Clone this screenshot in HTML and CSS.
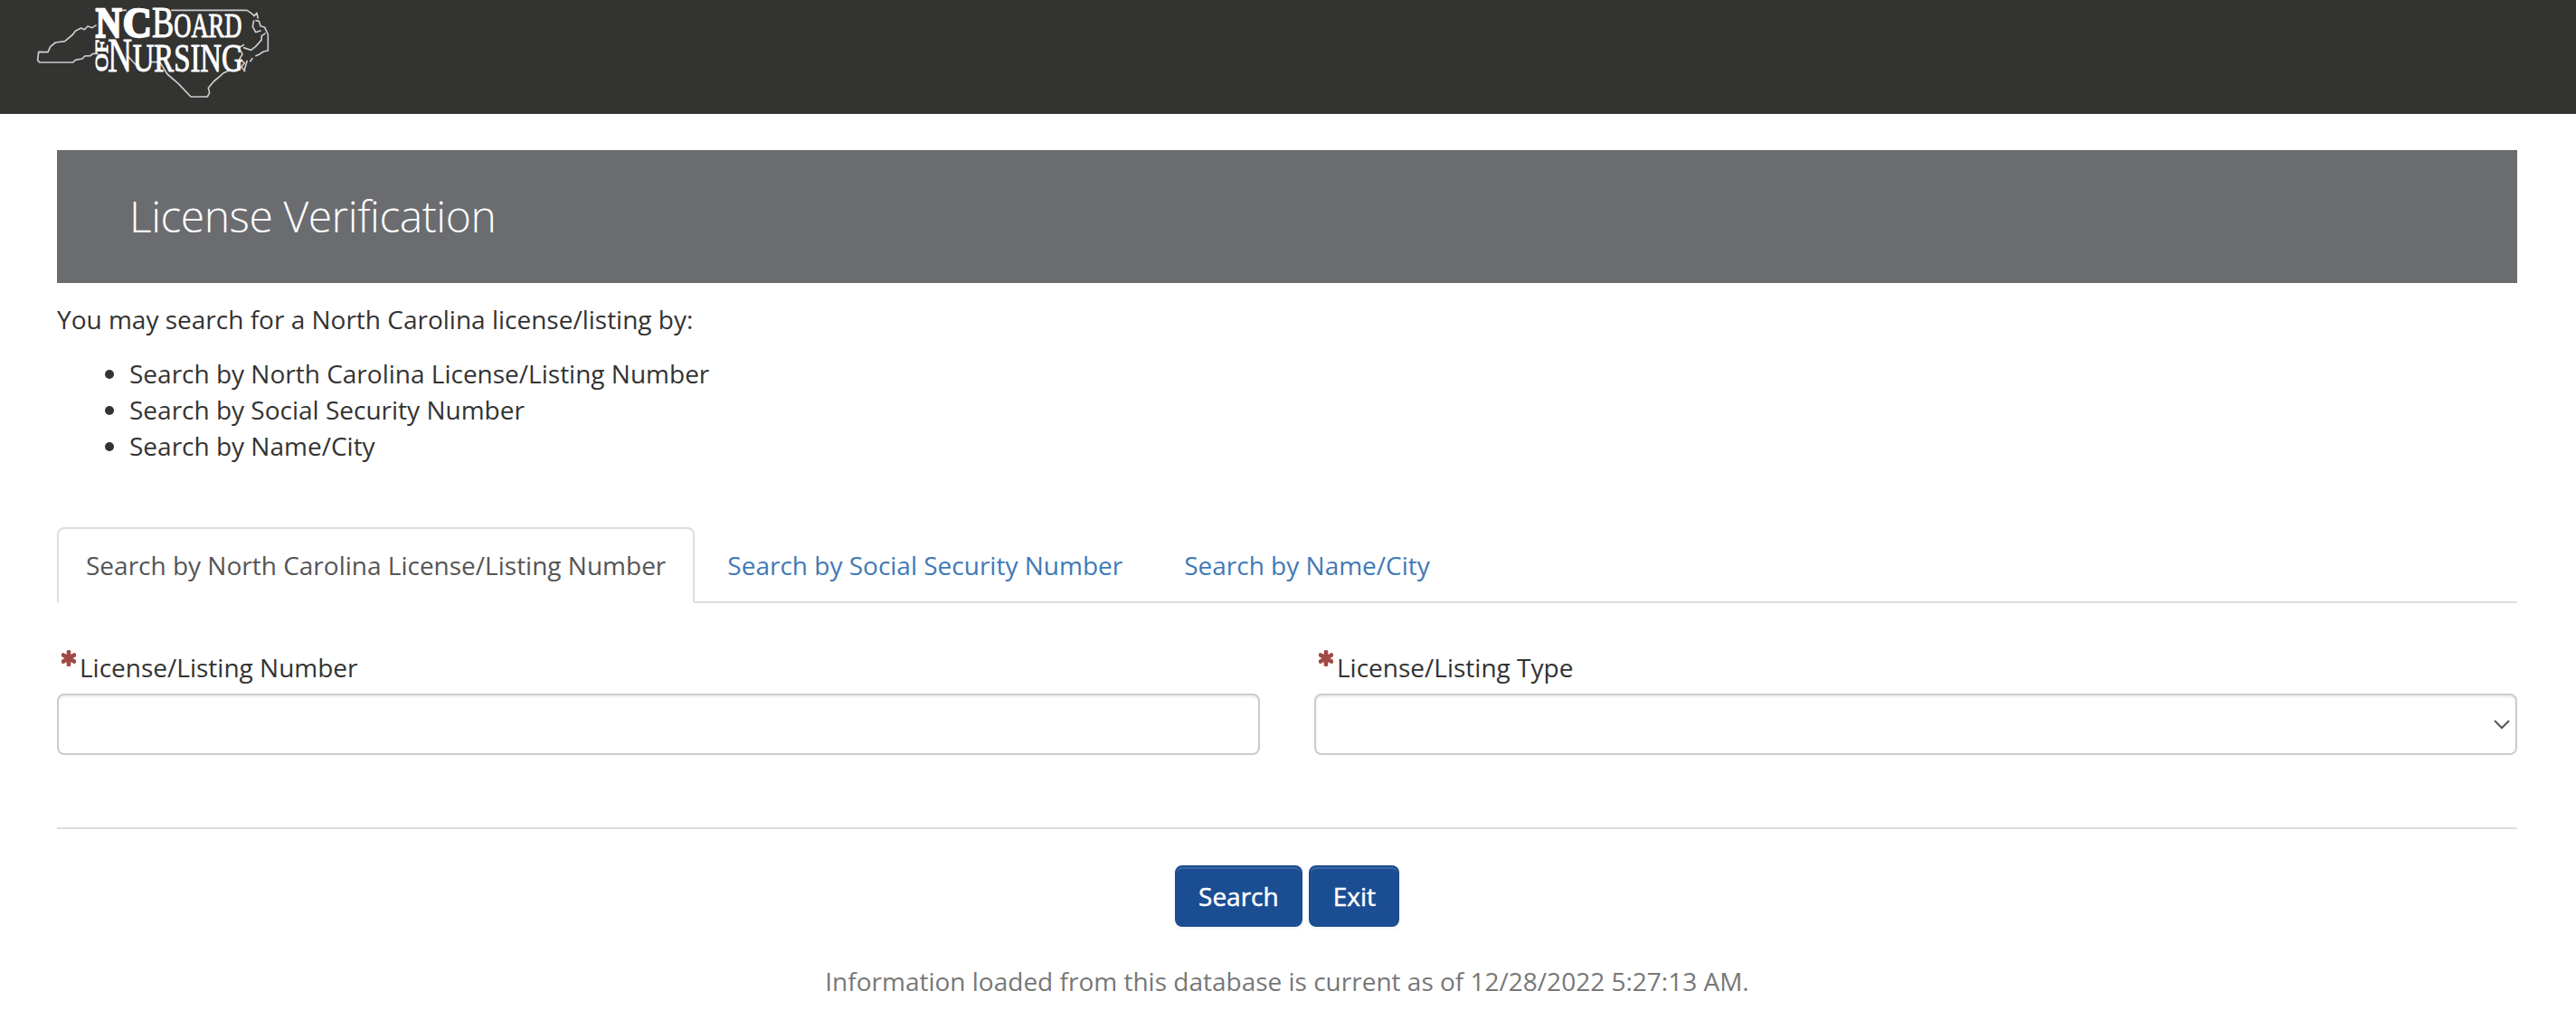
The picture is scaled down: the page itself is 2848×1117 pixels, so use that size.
FILE: index.html
```html
<!DOCTYPE html>
<html lang="en">
<head>
<meta charset="utf-8">
<title>License Verification</title>
<link rel="stylesheet" href="styles.css">
</head>
<body>
<header class="site-header">
  <svg class="logo" viewBox="0 0 840 378" role="img" aria-label="NC Board of Nursing">
    <g class="outline">
      <path d="M230 83L216 92L201 87L190 98L179 93L160 103L152 114L125 137L94 141L77 155L69 173L38 172L35 200L41 207H152L160 199L183 195L191 186L210 185L218 178H236"/>
      <path d="M310 34H330M478 34H729L744 44L753 53L762 43L766 62M752 67L748 88L758 107L776 101M757 68L769 70L774 86L788 91L799 114V168L784 171L769 181L757 186M791 110L778 119L777 133L758 154L743 166L717 158M748 193L739 205M730 200L719 238M720 148L703 158L714 180L704 197L721 209L710 222L724 236"/>
      <path d="M336 188L350 204L372 226M410 206H440L465 246L502 278L543 321H598L605 308L601 292L619 270L642 251L650 243L674 232"/>
    </g>
    <g class="wordmark">
      <text class="heavy" x="227" y="124" font-size="141" textLength="86" lengthAdjust="spacingAndGlyphs">N</text>
      <text class="heavy" x="317" y="123" font-size="138" textLength="96" lengthAdjust="spacingAndGlyphs">C</text>
      <text x="414" y="124" font-size="146" textLength="73" lengthAdjust="spacingAndGlyphs">B</text>
      <text x="487" y="124" font-size="112" textLength="225" lengthAdjust="spacingAndGlyphs">OARD</text>
      <text transform="translate(267 237) rotate(-90)" x="0" y="0" font-size="55" textLength="105" lengthAdjust="spacingAndGlyphs">OF</text>
      <text x="268" y="238" font-size="160" textLength="80" lengthAdjust="spacingAndGlyphs">N</text>
      <text x="350" y="238" font-size="131" textLength="366" lengthAdjust="spacingAndGlyphs">URSING</text>
    </g>
  </svg>
</header>
<main class="page">
  <div class="banner"><h1>License Verification</h1></div>
  <p class="intro">You may search for a North Carolina license/listing by:</p>
  <ul class="options">
    <li>Search by North Carolina License/Listing Number</li>
    <li>Search by Social Security Number</li>
    <li>Search by Name/City</li>
  </ul>
  <nav class="tabs">
    <a class="tab active">Search by North Carolina License/Listing Number</a>
    <a class="tab">Search by Social Security Number</a>
    <a class="tab">Search by Name/City</a>
  </nav>
  <form class="search-form">
    <div class="fields">
      <div class="field">
        <label for="number"><svg class="required" viewBox="0 0 16 18"><path d="M8 2V16M2 5.5L14 12.5M14 5.5L2 12.5"/></svg>License/Listing Number</label>
        <input class="control" id="number" type="text">
      </div>
      <div class="field">
        <label for="type"><svg class="required" viewBox="0 0 16 18"><path d="M8 2V16M2 5.5L14 12.5M14 5.5L2 12.5"/></svg>License/Listing Type</label>
        <div class="control select" id="type"><svg class="chevron" viewBox="0 0 18 11"><path d="M1 1L9 9L17 1"/></svg></div>
      </div>
    </div>
    <div class="actions">
      <button class="button" type="button">Search</button>
      <button class="button" type="button">Exit</button>
    </div>
  </form>
  <p class="note">Information loaded from this database is current as of 12/28/2022 5:27:13 AM.</p>
</main>
</body>
</html>
```
FILE: styles.css
```css
* { box-sizing: border-box; }
body {
  margin: 0;
  background: #fff;
  color: #333;
  font: 28px/40px "Open Sans", sans-serif;
  overflow: hidden;
}
.site-header { height: 126px; padding-left: 30px; background: #333331; }
.logo { display: block; width: 280px; height: 126px; }
.outline path { fill: none; stroke: #ccc; stroke-width: 5; stroke-linejoin: round; }
.wordmark { fill: #fff; stroke: #fff; stroke-width: 3; font-family: "Liberation Serif", serif; }
.heavy { font-weight: 700; stroke-width: 7; }
.page { padding: 40px 65px 0 63px; }
.banner { height: 147px; padding: 40px 80px; background: #6b6c70; }
h1 {
  margin: 0;
  color: #fff;
  font-size: 48px;
  font-weight: 300;
  line-height: 65px;
  letter-spacing: -.47px;
}
.intro { margin: 20px 0; }
.options { margin: 0; padding-left: 80px; }
.tabs { display: flex; gap: 4px; height: 84px; margin-top: 70px; border-bottom: 2px solid #ddd; }
.tab {
  height: 84px;
  padding: 20px 30px;
  border: 2px solid transparent;
  border-radius: 8px 8px 0 0;
  color: #4179b5;
}
.active { background: #fff; border-color: #ddd #ddd #fff; color: #555; }
.fields { display: grid; grid-template-columns: 1fr 1fr; gap: 60px; padding: 51px 0 80px; border-bottom: 2px solid #ddd; }
label { display: flex; height: 49px; }
.required { width: 16px; height: 18px; margin: 1px 4px 0 5px; }
.required path { fill: none; stroke: #a04a45; stroke-width: 4.6; stroke-linecap: round; }
.control {
  display: block;
  width: 100%;
  height: 68px;
  border: 2px solid #ccc;
  border-radius: 8px;
  background: #fff;
  box-shadow: inset 0 2px 2px rgba(0, 0, 0, .075);
}
.select { display: flex; align-items: center; justify-content: flex-end; padding-right: 6px; }
.chevron { width: 18px; height: 11px; }
.chevron path { fill: none; stroke: #555; stroke-width: 2; }
.actions { display: flex; justify-content: center; gap: 7px; padding-top: 40px; }
.button {
  height: 68px;
  padding: 0 24.5px;
  border: 2px solid #1b4d93;
  border-radius: 8px;
  background: #1b4d93;
  color: #fff;
  font: 500 28px/40px "Open Sans", sans-serif;
  -webkit-text-stroke: .5px #fff;
  box-shadow: inset 0 2px 0 rgba(255, 255, 255, .15), 0 2px 4px rgba(0, 0, 0, .05);
}
.note { margin: 40px 0 0; color: #777; text-align: center; }
```
